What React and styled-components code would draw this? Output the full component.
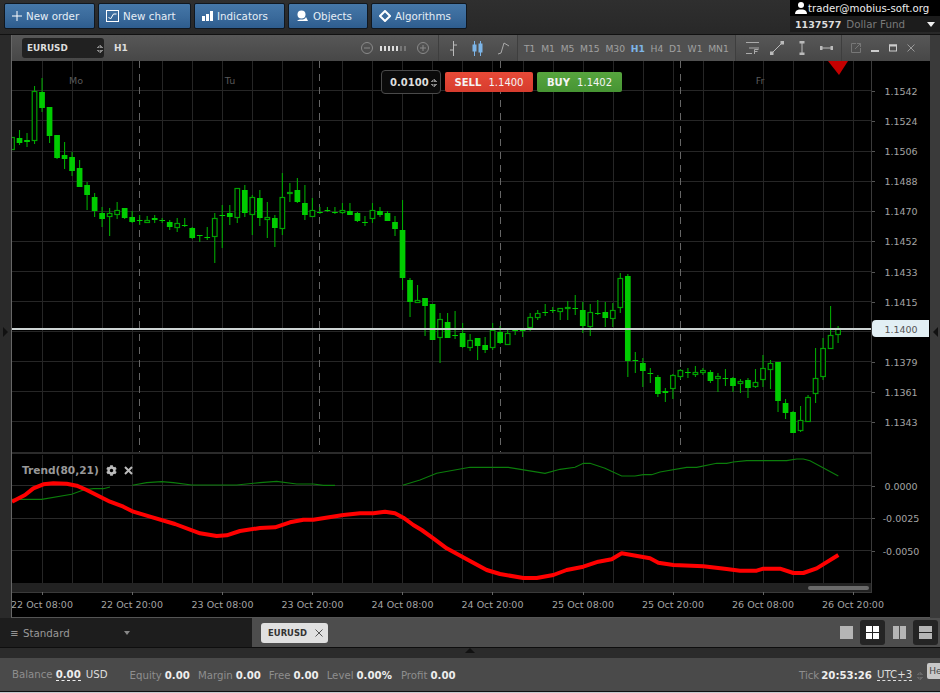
import React from 'react';
import styled, { createGlobalStyle } from 'styled-components';
import { FaCog } from 'react-icons/fa';

const GlobalStyle = createGlobalStyle`
  html, body {
    margin: 0;
    padding: 0;
    background: #2a2a2a;
    font-family: "DejaVu Sans", Verdana, sans-serif;
    overflow: hidden;
  }
`;

// [hollow, wickTop, bodyTop, bodyBottom, wickBottom], one candle every 7.51px from x=12
const candles = [
  [1,137,137,150,150],[0,130,138,143,145],[0,133,140,142,147],[1,86,91,141,144],[0,78,92,108,112],
  [0,107,107,136,143],[0,135,135,158,159],[0,142,155,159,169],[0,152,157,171,176],[0,160,168,187,187],
  [0,182,185,195,210],[0,193,197,211,217],[0,207,213,219,227],[1,208,213,217,236],[1,202,210,215,219],
  [0,208,208,218,219],[0,211,217,222,223],[0,215,220,221,225],[1,216,220,223,223],[0,215,218,220,223],
  [0,218,220,221,223],[0,220,222,227,230],[1,218,223,228,232],[0,218,225,226,227],[0,227,228,238,239],
  [0,235,235,236,242],[0,227,237,238,240],[1,213,218,237,263],[0,205,215,216,248],[0,205,213,217,225],
  [1,188,188,218,223],[0,185,190,213,217],[1,195,197,215,235],[0,190,198,218,226],[1,202,217,220,238],
  [0,215,218,228,247],[1,173,197,229,235],[1,183,192,194,202],[0,178,190,202,203],
  [0,185,203,215,220],[1,198,210,217,217],[0,207,212,213,214],[0,207,210,211,212],[0,207,212,213,214],
  [1,203,210,213,214],[0,203,211,215,215],[0,212,213,221,222],[0,216,222,223,226],[1,203,210,219,223],
  [0,207,211,215,217],[0,211,213,221,221],[0,216,222,229,236],[0,200,230,278,290],[0,278,280,302,317],
  [1,285,300,303,303],[0,298,298,306,336],[0,304,304,340,340],[1,313,319,338,363],[0,313,322,338,338],
  [0,311,335,336,339],[0,323,333,347,348],[1,334,340,348,351],[0,338,338,346,360],[0,337,345,350,353],
  [1,323,330,348,350],[0,326,332,343,344],[1,328,333,345,345],[0,328,330,331,335],[0,328,330,331,337],
  [1,313,317,328,331],[1,310,313,318,320],[0,304,312,313,316],[0,307,310,311,313],[1,308,308,312,320],
  [1,301,307,309,320],[0,295,308,309,315],[0,302,310,326,333],[1,304,312,327,336],[0,300,313,314,315],
  [0,302,312,318,327],[1,303,310,319,327],[1,273,278,308,313],[0,274,276,361,377],[0,352,360,361,373],
  [0,358,363,371,387],[0,368,373,374,383],[0,375,377,394,397],[0,388,391,393,402],[1,374,375,389,399],
  [1,369,370,377,379],[0,368,372,373,378],[1,366,372,375,377],[1,368,370,373,375],[0,370,372,381,383],
  [1,373,376,379,392],[0,369,378,379,386],[0,377,378,386,392],[1,379,381,384,393],[0,378,380,388,398],
  [1,369,382,387,388],[1,355,368,380,387],[1,360,363,370,389],[0,362,362,401,412],[0,399,403,413,419],
  [0,411,412,433,433],[1,406,420,431,432],[1,395,397,422,422],[1,348,378,394,403],[1,338,348,377,380],
  [1,306,335,349,349],[1,326,328,335,343],
];

const gridX = Array.from({ length: 28 }, (_, i) => Math.round(41.7 + i * 30.05) + 0.5);
const gridY = Array.from({ length: 13 }, (_, i) => Math.round(90.3 + i * 30.1) + 0.5);
const dashedX = [139.5, 319.5, 500.5, 680.5];
const priceLabels = [
  ['1.1542', 91], ['1.1524', 121], ['1.1506', 151], ['1.1488', 181], ['1.1470', 211], ['1.1452', 241],
  ['1.1433', 272], ['1.1415', 302], ['1.1379', 362], ['1.1361', 392], ['1.1343', 422],
];
const indicatorLabels = [['0.0000', 486], ['-0.0025', 518], ['-0.0050', 551]];
const timeLabels = [
  ['22 Oct 08:00', 42], ['22 Oct 20:00', 132], ['23 Oct 08:00', 222.5], ['23 Oct 20:00', 312.5],
  ['24 Oct 08:00', 402.5], ['24 Oct 20:00', 492.5], ['25 Oct 08:00', 583], ['25 Oct 20:00', 673],
  ['26 Oct 08:00', 763], ['26 Oct 20:00', 853],
];

// indicator lines, read off the reference in 3x crop coordinates
const leftCrop = (p) => `${p[0] / 3},${450 + p[1] / 3}`;
const rightCrop = (p) => `${470 + p[0] / 3},${450 + p[1] / 3}`;
const greenA = [[36,148],[125,148],[215,133],[250,120],[280,116],[310,116],[330,111]].map(leftCrop).join(' ');
const greenB = [[397,106],[440,98],[485,95],[520,98],[575,105],[710,105],[780,98],[830,94],[890,102],[940,102],[970,106],[1005,106]].map(leftCrop).join(' ');
const greenC = [
  ...[[1208,106],[1260,90],[1310,70]].map(leftCrop),
  ...[[0,52],[115,52],[225,70],[270,58],[315,52],[340,40],[360,40],[405,55],[455,78],[495,78],[520,74],[545,74],[570,66],[650,52],[680,52],[740,40],[770,40],[790,36],[830,32],[950,32],[980,27],[1000,27],[1020,32],[1105,78]].map(rightCrop),
].join(' ');
const redLine = [
  ...[[36,155],[75,135],[100,115],[130,103],[160,100],[200,101],[230,107],[260,120],[330,155],[370,170],[400,185],[450,200],[525,222],[600,250],[650,258],[680,256],[720,243],[780,234],[825,232],[870,217],[910,209],[940,209],[1030,195],[1080,190],[1120,190],[1155,185],[1185,190],[1210,203],[1240,225],[1265,240],[1300,265],[1340,295]].map(leftCrop),
  ...[[0,333],[50,360],[90,372],[160,384],[200,384],[250,375],[290,360],[340,350],[385,335],[425,328],[455,310],[540,325],[565,338],[610,345],[700,349],[770,357],[810,362],[860,362],[880,356],[930,356],[970,369],[1000,369],[1040,355],[1105,315]].map(rightCrop),
].join(' ');

const timeframes = ['T1', 'M1', 'M5', 'M15', 'M30', 'H1', 'H4', 'D1', 'W1', 'MN1'];

const Candle = ({ index, data }) => {
  const [hollow, wickTop, bodyTop, bodyBottom, wickBottom] = data;
  const x = 12 + index * 7.51;
  return (
    <g>
      <line x1={x} x2={x} y1={wickTop} y2={wickBottom} stroke="#00a800" strokeWidth="1.1" />
      {hollow ? (
        <rect x={x - 2.3} y={bodyTop + 0.5} width={4.6} height={Math.max(bodyBottom - bodyTop - 1, 1)} fill="#000" stroke="#00a000" strokeWidth="1.2" />
      ) : (
        <rect x={x - 2.85} y={bodyTop} width={5.7} height={Math.max(bodyBottom - bodyTop, 1)} fill="#00cc00" />
      )}
    </g>
  );
};

const ChartDrawing = () => (
  <ChartSvg viewBox="12 61 917 556">
    <rect x="12" y="61" width="917" height="556" fill="#000" />
    {gridX.map((x) => (
      <g key={x} shapeRendering="crispEdges" stroke="#262626">
        <line x1={x} x2={x} y1="61" y2="452" />
        <line x1={x} x2={x} y1="455" y2="583" />
      </g>
    ))}
    {gridY.map((y) => (
      <line key={y} x1="12" x2="872" y1={y} y2={y} stroke="#262626" shapeRendering="crispEdges" />
    ))}
    {dashedX.map((x) => (
      <line key={x} x1={x} x2={x} y1="61" y2="452" stroke="#666" strokeDasharray="7 6" shapeRendering="crispEdges" />
    ))}
    <AxisText x="76" y="84" fill="#5a5a5a">Mo</AxisText>
    <AxisText x="230" y="84" fill="#5a5a5a">Tu</AxisText>
    <AxisText x="760" y="84" fill="#5a5a5a">Fr</AxisText>

    <rect x="12" y="452" width="860" height="2" fill="#2b2b2b" />
    {candles.map((c, i) => <Candle key={i} index={i} data={c} />)}

    <rect x="12" y="328" width="860" height="2" fill="#ccd3d3" />
    <polygon points="828,61 848,61 839,75" fill="#c40000" />

    {[485.5, 518.5, 550.5].map((y) => (
      <line key={y} x1="12" x2="872" y1={y} y2={y} stroke="#2a2a2a" shapeRendering="crispEdges" />
    ))}
    <polyline points={greenA} fill="none" stroke="#0b7d0b" strokeWidth="1.1" />
    <polyline points={greenB} fill="none" stroke="#0b7d0b" strokeWidth="1.1" />
    <polyline points={greenC} fill="none" stroke="#0b7d0b" strokeWidth="1.1" />
    <polyline points={redLine} fill="none" stroke="#ff0000" strokeWidth="4" strokeLinejoin="round" />

    <rect x="12" y="583" width="860" height="9" fill="#222" />
    <rect x="808" y="586" width="61" height="4" rx="2" fill="#6a6a6a" />
    <line x1="12" x2="872" y1="592.5" y2="592.5" stroke="#3a3a3a" shapeRendering="crispEdges" />

    <line x1="871.5" x2="871.5" y1="61" y2="592" stroke="#3a3a3a" shapeRendering="crispEdges" />
    {priceLabels.map(([label, y]) => (
      <g key={label}>
        <line x1="872" x2="875" y1={y + 0.5} y2={y + 0.5} stroke="#555" shapeRendering="crispEdges" />
        <AxisText x="901" y={y + 3.5} fill="#a4a4a4">{label}</AxisText>
      </g>
    ))}
    {indicatorLabels.map(([label, y]) => (
      <g key={label}>
        <line x1="872" x2="875" y1={y + 0.5} y2={y + 0.5} stroke="#555" shapeRendering="crispEdges" />
        <AxisText x="901" y={y + 3.5} fill="#a4a4a4">{label}</AxisText>
      </g>
    ))}
    {timeLabels.map(([label, x]) => (
      <g key={label}>
        <line x1={x} x2={x} y1="592" y2="595" stroke="#666" shapeRendering="crispEdges" />
        <AxisText x={x} y="608" fill="#a4a4a4">{label}</AxisText>
      </g>
    ))}
    <path d="M929 320H876a4 4 0 0 0-4 4v9a4 4 0 0 0 4 4H929Z" fill="#e2eff4" />
    <AxisText x="901" y="332.5" fill="#555">1.1400</AxisText>
  </ChartSvg>
);

const App = () => (
  <>
    <GlobalStyle />
    <Page>
      <TopBar>
        <ActionGroup>
          <ActionButton $width={91}>
            <svg width="10" height="10" viewBox="0 0 10 10"><path d="M5 0v10M0 5h10" stroke="#fff" strokeWidth="1" /></svg>
            New order
          </ActionButton>
          <ActionButton $width={93}>
            <svg width="13" height="13" viewBox="0 0 13 13" fill="none" stroke="#fff"><rect x="0.5" y="0.5" width="12" height="11" /><path d="M2.5 7l2 2 3-5h3" /></svg>
            New chart
          </ActionButton>
          <ActionButton $width={91}>
            <svg width="11" height="10" viewBox="0 0 11 10" fill="#fff"><rect y="5" width="3" height="5" /><rect x="4" y="3" width="3" height="7" /><rect x="8" width="3" height="10" /></svg>
            Indicators
          </ActionButton>
          <ActionButton $width={80}>
            <svg width="13" height="12" viewBox="0 0 13 12" fill="#fff"><circle cx="5.5" cy="4.5" r="4" /><path d="M1 11c2-2 4-1.5 5-1.5S9.500 9 10 7l2 4Z" /></svg>
            Objects
          </ActionButton>
          <ActionButton $width={96}>
            <svg width="12" height="12" viewBox="0 0 12 12" fill="none" stroke="#fff" strokeWidth="2"><path d="M6 1l5 5-5 5-5-5Z" /></svg>
            Algorithms
          </ActionButton>
        </ActionGroup>
        <AccountBox>
          <AccountEmail>
            <svg width="12" height="12" viewBox="0 0 12 12" fill="#fff"><circle cx="6" cy="3" r="3" /><path d="M0 12c0-3 2-4 4-4.500h4c2 .5 4 1.500 4 4.500Z" /></svg>
            trader@mobius-soft.org
          </AccountEmail>
          <AccountRow>
            <AccountNumber>1137577</AccountNumber>
            <AccountName>Dollar Fund</AccountName>
            <AccountCaret />
          </AccountRow>
        </AccountBox>
      </TopBar>

      <MainRow>
        <SideStrip>
          <StripArrow $dir="right" />
        </SideStrip>
        <ChartPanel>
          <ChartToolbar>
            <SymbolSelect>
              EURUSD
              <Spinner />
            </SymbolSelect>
            <PeriodLabel>H1</PeriodLabel>
            <ZoomGroup>
              <svg width="14" height="14" viewBox="0 0 14 14" fill="none" stroke="#8a8a8a"><circle cx="7" cy="7" r="5.500" /><path d="M4 7h6" /></svg>
              <ZoomDots>
                {[0, 1, 2, 3, 4, 5, 6].map((i) => <ZoomDot key={i} $off={i > 4} />)}
              </ZoomDots>
              <svg width="14" height="14" viewBox="0 0 14 14" fill="none" stroke="#8a8a8a"><circle cx="7" cy="7" r="5.500" /><path d="M4 7h6M7 4v6" /></svg>
            </ZoomGroup>
            <ChartTypeGroup>
              <svg width="9" height="15" viewBox="0 0 9 15" fill="none" stroke="#bbb"><path d="M4.500 0v15M1 9h3.500M4.500 4H8" /></svg>
              <svg width="11" height="15" viewBox="0 0 11 15" stroke="#7db5e8"><path d="M2.500 0v15M8.500 0v15" /><rect x="1" y="4" width="3" height="6" fill="#7db5e8" /><rect x="7" y="3" width="3" height="8" fill="#7db5e8" /></svg>
              <svg width="13" height="14" viewBox="0 0 13 14" fill="none" stroke="#aaa"><path d="M1 13l3-1 3-10 5 3" /></svg>
            </ChartTypeGroup>
            <TimeframeGroup>
              {timeframes.map((t) => <Timeframe key={t} $active={t === 'H1'}>{t}</Timeframe>)}
            </TimeframeGroup>
            <DrawGroup>
              <svg width="13" height="14" viewBox="0 0 13 14" stroke="#aaa" fill="none"><path d="M0 1.500h13M3 7h10M0 12.500h6" /><path d="M8.500 13V8.500h4M8.500 10.500h3" /></svg>
              <svg width="14" height="14" viewBox="0 0 14 14" stroke="#bbb" fill="#bbb"><path d="M2 12L12 2" /><rect x="0" y="11" width="3" height="3" /><rect x="11" y="0" width="3" height="3" /></svg>
              <svg width="6" height="14" viewBox="0 0 6 14" stroke="#bbb" fill="#bbb"><path d="M3 1v12" /><rect x="1" y="0" width="4" height="2" /><rect x="1" y="12" width="4" height="2" /></svg>
              <svg width="13" height="6" viewBox="0 0 13 6" stroke="#bbb" fill="#bbb"><path d="M1 3h11" /><rect x="0" y="1.500" width="2" height="3" /><rect x="11" y="1.500" width="2" height="3" /></svg>
            </DrawGroup>
            <WindowGroup>
              <svg width="10" height="10" viewBox="0 0 10 10" fill="none" stroke="#777"><path d="M5 .5H.5v9h9V5M6 .5h3.500V4M9.500.5L4 6" /></svg>
              <svg width="8" height="10" viewBox="0 0 8 10" fill="#ccc"><rect y="7" width="8" height="2" /></svg>
              <svg width="8" height="8" viewBox="0 0 8 8" fill="none" stroke="#ccc"><rect x="0.5" y="1" width="7" height="6" /><path d="M0 1.500h8" strokeWidth="2" /></svg>
              <svg width="8" height="8" viewBox="0 0 8 8" stroke="#999"><path d="M.5.5l7 7M7.500.5l-7 7" /></svg>
            </WindowGroup>
          </ChartToolbar>
          <ChartArea>
            <ChartDrawing />
            <TradePanel>
              <AmountBox>
                0.0100
                <Spinner />
              </AmountBox>
              <TradeButton $kind="sell"><b>SELL</b> 1.1400</TradeButton>
              <TradeButton $kind="buy"><b>BUY</b> 1.1402</TradeButton>
            </TradePanel>
            <TrendLegend>
              Trend(80,21)
              <FaCog size={11} />
              <svg width="9" height="9" viewBox="0 0 9 9" stroke="#bbb" strokeWidth="2"><path d="M1 1l7 7M8 1L1 8" /></svg>
            </TrendLegend>
          </ChartArea>
        </ChartPanel>
        <SideStrip $right>
          <StripArrow $dir="left" />
        </SideStrip>
      </MainRow>

      <TabRow>
        <WorkspacePicker>
          <WorkspaceName>
            <span>≡</span> Standard
          </WorkspaceName>
          <WorkspaceCaret />
        </WorkspacePicker>
        <TabStrip>
          <ChartTab>
            EURUSD
            <svg width="8" height="8" viewBox="0 0 8 8" stroke="#555"><path d="M.5.5l7 7M7.500.5l-7 7" /></svg>
          </ChartTab>
          <LayoutGroup>
            <LayoutButton $width={27}>
              <LayoutCell $w={13} $h={13} />
            </LayoutButton>
            <LayoutButton $width={25} $active $cols={2}>
              <LayoutCell $w={6} $h={6} $white />
              <LayoutCell $w={6} $h={6} $white />
              <LayoutCell $w={6} $h={6} $white />
              <LayoutCell $w={6} $h={6} $white />
            </LayoutButton>
            <LayoutButton $width={28} $cols={2}>
              <LayoutCell $w={6} $h={13} />
              <LayoutCell $w={6} $h={13} />
            </LayoutButton>
            <LayoutButton $width={25} $active>
              <LayoutCell $w={13} $h={6} />
              <LayoutCell $w={13} $h={6} />
            </LayoutButton>
          </LayoutGroup>
        </TabStrip>
      </TabRow>

      <DividerBand>
        <BandArrow />
      </DividerBand>

      <StatusBar>
        <StatusGroup>
          <StatusItem $gap={22}>
            <StatusLabel>Balance</StatusLabel>
            <DottedValue>0.00</DottedValue>
            <UsdLabel>USD</UsdLabel>
          </StatusItem>
          <StatusItem $gap={8}><StatusLabel>Equity</StatusLabel><StatusValue>0.00</StatusValue></StatusItem>
          <StatusItem $gap={8}><StatusLabel>Margin</StatusLabel><StatusValue>0.00</StatusValue></StatusItem>
          <StatusItem $gap={8}><StatusLabel>Free</StatusLabel><StatusValue>0.00</StatusValue></StatusItem>
          <StatusItem $gap={9}><StatusLabel>Level</StatusLabel><StatusValue>0.00%</StatusValue></StatusItem>
          <StatusItem><StatusLabel>Profit</StatusLabel><StatusValue>0.00</StatusValue></StatusItem>
        </StatusGroup>
        <ClockGroup>
          <StatusLabel>Tick</StatusLabel>
          <StatusValue>20:53:26</StatusValue>
          <UtcValue>UTC+3</UtcValue>
          <ClockSpinner />
          <HelpButton>He</HelpButton>
        </ClockGroup>
      </StatusBar>
      <PageEdge />
    </Page>
  </>
);

const Page = styled.div`
  width: 940px;
  height: 693px;
  overflow: hidden;
  display: flex;
  flex-direction: column;
  background: #2a2a2a;
`;

const TopBar = styled.div`
  height: 34px;
  flex: none;
  display: flex;
  justify-content: space-between;
  background: linear-gradient(#2f2f2f, #282828);
  border-bottom: 1px solid #111;
`;

const ActionGroup = styled.div`
  display: flex;
  gap: 3px;
  padding: 3px 0 0 4px;
`;

const ActionButton = styled.button`
  width: ${(p) => p.$width}px;
  height: 26px;
  padding: 0 0 0 7px;
  display: flex;
  align-items: center;
  gap: 4px;
  box-sizing: border-box;
  border: 1px solid #10171f;
  border-radius: 2px;
  background: linear-gradient(#4577a8, #3a6a9b 55%, #2e5d8e);
  color: #e6eef6;
  font-family: "DejaVu Sans", sans-serif;
  font-size: 10.3px;
  font-weight: 400;
  white-space: nowrap;
`;

const AccountBox = styled.div`
  width: 150px;
  height: 32px;
  background: #111;
`;

const AccountEmail = styled.div`
  height: 16px;
  background: #000;
  display: flex;
  align-items: center;
  gap: 1px;
  padding-left: 5px;
  color: #eee;
  font-size: 10.2px;
  white-space: nowrap;
`;

const AccountRow = styled.div`
  height: 16px;
  display: flex;
  align-items: center;
  padding: 0 5px;
  gap: 5px;
  background: #1c1c1c;
  font-size: 10.3px;
`;

const AccountNumber = styled.span`
  color: #ddd;
  font-size: 9.5px;
  font-weight: 700;
`;

const AccountName = styled.span`
  color: #7a7a7a;
  flex: 1;
`;

const AccountCaret = styled.span`
  border-left: 4px solid transparent;
  border-right: 4px solid transparent;
  border-top: 5px solid #eee;
`;

const MainRow = styled.div`
  height: 583px;
  flex: none;
  display: flex;
`;

const SideStrip = styled.div`
  width: ${(p) => (p.$right ? 10 : 11)}px;
  flex: none;
  display: flex;
  align-items: center;
  justify-content: center;
  background: ${(p) => (p.$right ? '#3a3a3a' : '#2a2a2a')};
`;

const StripArrow = styled.span`
  margin-top: 10px;
  border-top: 5px solid transparent;
  border-bottom: 5px solid transparent;
  ${(p) => (p.$dir === 'left' ? 'border-right: 5px solid #111;' : 'border-left: 5px solid #111;')}
`;

const ChartPanel = styled.div`
  width: 919px;
  flex: none;
  display: flex;
  flex-direction: column;
  box-sizing: border-box;
  border-left: 1px solid #666;
  border-bottom: 1px solid #555;
`;

const ChartToolbar = styled.div`
  height: 26px;
  flex: none;
  display: flex;
  align-items: stretch;
  background: linear-gradient(#575757, #474747);
`;

const SymbolSelect = styled.div`
  width: 82px;
  height: 20px;
  margin: 3px 0 0 10px;
  padding-left: 5px;
  box-sizing: border-box;
  display: flex;
  align-items: center;
  justify-content: space-between;
  border-radius: 3px;
  background: #212121;
  color: #ddd;
  font-size: 8.8px;
  font-weight: 700;
`;

const PeriodLabel = styled.div`
  width: 256px;
  padding-left: 10px;
  box-sizing: border-box;
  display: flex;
  align-items: center;
  color: #ddd;
  font-size: 9px;
  font-weight: 700;
`;

const ZoomGroup = styled.div`
  width: 79px;
  display: flex;
  align-items: center;
  gap: 6px;
  box-sizing: border-box;
  border-right: 1px solid #3e3e3e;
`;

const ZoomDots = styled.div`
  display: flex;
  gap: 2px;
  width: 30px;
`;

const ZoomDot = styled.span`
  width: 2px;
  height: 5px;
  background: ${(p) => (p.$off ? '#777' : '#ddd')};
`;

const ChartTypeGroup = styled.div`
  width: 79px;
  display: flex;
  align-items: center;
  gap: 14px;
  padding-left: 10px;
  box-sizing: border-box;
  border-right: 1px solid #3e3e3e;
`;

const TimeframeGroup = styled.div`
  width: 218px;
  padding-left: 6px;
  box-sizing: border-box;
  display: flex;
  align-items: center;
  gap: 5.700px;
  background: #505050;
  border-right: 1px solid #3e3e3e;
`;

const Timeframe = styled.span`
  color: ${(p) => (p.$active ? '#7db5e8' : '#a0a0a0')};
  font-size: 9.2px;
  font-weight: ${(p) => (p.$active ? 700 : 400)};
`;

const DrawGroup = styled.div`
  width: 106px;
  display: flex;
  align-items: center;
  gap: 11px;
  padding-left: 10px;
  box-sizing: border-box;
  border-right: 1px solid #3e3e3e;
  svg:nth-child(n + 3) {
    margin-left: 4px;
  }
`;

const WindowGroup = styled.div`
  flex: 1;
  display: flex;
  align-items: center;
  gap: 10px;
  padding-left: 9px;
`;

const ChartArea = styled.div`
  position: relative;
  height: 556px;
  background: #000;
`;

const ChartSvg = styled.svg`
  display: block;
  width: 917px;
  height: 556px;
`;

const AxisText = styled.text`
  font-family: "DejaVu Sans", sans-serif;
  font-size: 9.5px;
  text-anchor: middle;
`;

const TradePanel = styled.div`
  position: absolute;
  left: 369px;
  top: 9px;
  display: flex;
  align-items: center;
  gap: 4px;
`;

const AmountBox = styled.div`
  width: 60px;
  height: 24px;
  padding: 0 2px 0 8px;
  box-sizing: border-box;
  display: flex;
  align-items: center;
  justify-content: space-between;
  background: #0b0b0b;
  border: 1px solid #4a4a4a;
  border-radius: 4px;
  color: #ddd;
  font-size: 10px;
  font-weight: 700;
`;

const Spinner = styled.span`
  flex: none;
  width: 7px;
  height: 12px;
  margin-right: 1px;
  background:
    linear-gradient(135deg, transparent 50%, #888 50%) 0 3px / 3.500px 3px no-repeat,
    linear-gradient(225deg, transparent 50%, #888 50%) 3.500px 3px / 3.500px 3px no-repeat,
    linear-gradient(45deg, transparent 50%, #888 50%) 0 8px / 3.500px 3px no-repeat,
    linear-gradient(315deg, transparent 50%, #888 50%) 3.500px 8px / 3.500px 3px no-repeat;
`;

const ClockSpinner = styled(Spinner)`
  opacity: 0.45;
  margin: 0 2px;
`;

const TradeButton = styled.div`
  width: ${(p) => (p.$kind === 'sell' ? 88 : 85)}px;
  height: 20px;
  display: flex;
  align-items: center;
  justify-content: center;
  gap: 4px;
  border-radius: 2px;
  background: ${(p) => (p.$kind === 'sell' ? 'linear-gradient(#e84a38, #d63c2e)' : 'linear-gradient(#57a53e, #469433)')};
  color: #f4f4f4;
  font-size: 10px;
  white-space: pre;
  b {
    font-weight: 700;
  }
`;

const TrendLegend = styled.div`
  position: absolute;
  left: 10px;
  top: 403px;
  display: flex;
  align-items: center;
  gap: 7px;
  color: #999;
  font-size: 10.6px;
  font-weight: 700;
  svg {
    color: #bbb;
  }
`;

const TabRow = styled.div`
  height: 30px;
  flex: none;
  display: flex;
  box-sizing: border-box;
  border-bottom: 1px solid #0e0e0e;
`;

const WorkspacePicker = styled.div`
  width: 252px;
  flex: none;
  display: flex;
  align-items: center;
  background: #1d1d1d;
  padding-left: 10px;
  box-sizing: border-box;
`;

const WorkspaceName = styled.div`
  width: 114px;
  color: #999;
  font-size: 10.3px;
  span {
    color: #aaa;
    margin-right: 1px;
  }
`;

const WorkspaceCaret = styled.span`
  border-left: 3px solid transparent;
  border-right: 3px solid transparent;
  border-top: 4px solid #888;
`;

const TabStrip = styled.div`
  flex: 1;
  display: flex;
  align-items: center;
  justify-content: space-between;
  background: #4d4d4d;
  padding: 0 2px 0 9px;
`;

const ChartTab = styled.div`
  width: 67px;
  height: 20px;
  padding-left: 2px;
  box-sizing: border-box;
  display: flex;
  align-items: center;
  justify-content: center;
  gap: 8px;
  border-radius: 3px;
  background: #e0e0e0;
  color: #333;
  font-size: 8.4px;
  font-weight: 700;
`;

const LayoutGroup = styled.div`
  display: flex;
  align-items: center;
`;

const LayoutButton = styled.div`
  width: ${(p) => p.$width}px;
  height: 25px;
  display: grid;
  grid-template-columns: repeat(${(p) => p.$cols || 1}, auto);
  justify-content: center;
  align-content: center;
  gap: 1px;
  border-radius: 3px;
  background: ${(p) => (p.$active ? '#242424' : 'transparent')};
`;

const LayoutCell = styled.span`
  display: block;
  width: ${(p) => p.$w}px;
  height: ${(p) => p.$h}px;
  background: ${(p) => (p.$white ? '#fff' : '#b5b5b5')};
`;

const DividerBand = styled.div`
  height: 10px;
  flex: none;
  display: flex;
  justify-content: center;
  background: #2b2b2b;
`;

const BandArrow = styled.span`
  width: 0;
  height: 0;
  border-left: 5px solid transparent;
  border-right: 5px solid transparent;
  border-bottom: 5px solid #111;
`;

const StatusBar = styled.div`
  height: 33px;
  flex: none;
  display: flex;
  align-items: center;
  justify-content: space-between;
  padding: 1px 0 0 12px;
  box-sizing: border-box;
  background: #4a4a4a;
  font-size: 10.2px;
  white-space: nowrap;
`;

const StatusGroup = styled.div`
  display: flex;
  align-items: center;
`;

const StatusItem = styled.div`
  display: flex;
  align-items: baseline;
  gap: 3px;
  margin-right: ${(p) => p.$gap || 0}px;
`;

const StatusLabel = styled.span`
  color: #8e8e8e;
`;

const StatusValue = styled.span`
  color: #eee;
  font-weight: 700;
`;

const DottedValue = styled(StatusValue)`
  border-bottom: 1px dashed #eee;
`;

const UsdLabel = styled.span`
  margin-left: 2px;
  color: #ddd;
`;

const ClockGroup = styled.div`
  display: flex;
  align-items: center;
  gap: 2px;
  width: 141px;
`;

const UtcValue = styled.span`
  margin-left: 3px;
  color: #ddd;
  border-bottom: 1px dashed #ddd;
`;

const HelpButton = styled.div`
  width: 15px;
  height: 16px;
  flex: none;
  margin-top: -8px;
  padding-left: 2px;
  box-sizing: border-box;
  display: flex;
  align-items: center;
  background: #c8c8c8;
  border-radius: 2px 0 0 2px;
  color: #444;
  font-size: 9px;
`;

const PageEdge = styled.div`
  flex: 1;
  background: #c5cad0;
  border-top: 1px solid #111;
`;

export default App;
